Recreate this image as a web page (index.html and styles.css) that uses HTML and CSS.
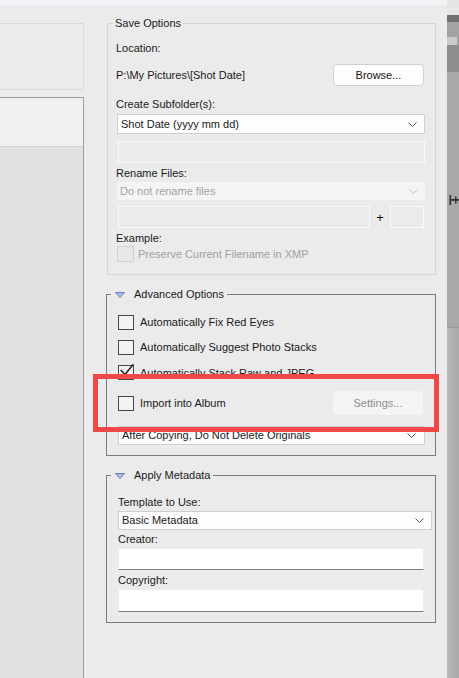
FILE: index.html
```html
<!DOCTYPE html>
<html>
<head>
<meta charset="utf-8">
<link rel="stylesheet" href="styles.css">
</head>
<body>
<div class="app">
  <div class="left">
    <div class="left-top"></div>
    <div class="left-list">
      <div class="left-head"></div>
      <div class="left-body"></div>
    </div>
  </div>

  <div class="main">
    <div class="group save">
      <div class="title save-title"><span>Save Options</span></div>
      <div class="lbl lbl-loc">Location:</div>
      <div class="row-loc">
        <span>P:\My Pictures\[Shot Date]</span>
        <div class="btn">Browse...</div>
      </div>
      <div class="lbl lbl-sub">Create Subfolder(s):</div>
      <div class="select sel-sub">
        <span>Shot Date (yyyy mm dd)</span>
        <svg class="chev" width="9" height="5" viewBox="0 0 9 5"><polyline points="0.5,0.5 4.5,4.5 8.5,0.5"/></svg>
      </div>
      <div class="dis-input"></div>
      <div class="lbl lbl-ren">Rename Files:</div>
      <div class="select dis-select">
        <span>Do not rename files</span>
        <svg class="chev light" width="9" height="5" viewBox="0 0 9 5"><polyline points="0.5,0.5 4.5,4.5 8.5,0.5"/></svg>
      </div>
      <div class="inrow">
        <div class="dis-input wide"></div>
        <div class="plus">+</div>
        <div class="dis-input small"></div>
      </div>
      <div class="lbl lbl-ex">Example:</div>
      <div class="cbrow dis">
        <span class="cb cb-dis"></span>
        <span class="cbtext">Preserve Current Filename in XMP</span>
      </div>
    </div>

    <div class="group adv">
      <div class="title adv-title"><span><svg class="tri" width="10" height="6" viewBox="0 0 10 6"><polygon points="0.5,0.5 9.5,0.5 5,5.5"/></svg>Advanced Options</span></div>
      <div class="cbrow r-1"><span class="cb"></span><span class="cbtext">Automatically Fix Red Eyes</span></div>
      <div class="cbrow r-2"><span class="cb"></span><span class="cbtext">Automatically Suggest Photo Stacks</span></div>
      <div class="cbrow r-3"><span class="cb"><svg class="check" width="16" height="16" viewBox="0 0 16 16"><polyline points="2.7,6 7,10.5 15.3,0.3"/></svg></span><span class="cbtext">Automatically Stack Raw and JPEG</span></div>
      <div class="cbrow r-4"><span class="cb"></span><span class="cbtext">Import into Album</span><div class="btn-dis">Settings...</div></div>
      <div class="select sel-after">
        <span>After Copying, Do Not Delete Originals</span>
        <svg class="chev" width="9" height="5" viewBox="0 0 9 5"><polyline points="0.5,0.5 4.5,4.5 8.5,0.5"/></svg>
      </div>
    </div>

    <div class="group meta">
      <div class="title adv-title"><span><svg class="tri" width="10" height="6" viewBox="0 0 10 6"><polygon points="0.5,0.5 9.5,0.5 5,5.5"/></svg>Apply Metadata</span></div>
      <div class="lbl lbl-tpl">Template to Use:</div>
      <div class="select sel-tpl">
        <span>Basic Metadata</span>
        <svg class="chev" width="9" height="5" viewBox="0 0 9 5"><polyline points="0.5,0.5 4.5,4.5 8.5,0.5"/></svg>
      </div>
      <div class="lbl lbl-cr">Creator:</div>
      <div class="txt txt-cr"></div>
      <div class="lbl lbl-cp">Copyright:</div>
      <div class="txt txt-cp"></div>
    </div>
  </div>

  <div class="rail">
    <div class="r1"></div>
    <div class="r2"></div>
    <div class="r3"></div>
    <div class="r4"><div class="r4a"></div></div>
    <div class="r5"></div>
    <div class="r6">
      <svg class="glyph" width="12" height="10" viewBox="0 0 12 10"><rect x="2.5" y="0" width="1.6" height="10"/><rect x="4" y="4" width="8" height="1.8"/><rect x="8" y="1.5" width="1.5" height="7"/></svg>
    </div>
    <div class="r7"></div>
  </div>
</div>
<div class="annot"></div>
</body>
</html>
```
FILE: styles.css
```css
* { box-sizing: border-box; }
html, body { margin: 0; padding: 0; }
body {
  width: 459px;
  height: 678px;
  overflow: hidden;
  position: relative;
  background: #ebebeb;
  font: 11px/13px "Liberation Sans", Arial, sans-serif;
  color: #1a1a1a;
}
.app { display: flex; height: 678px; }

/* left panel */
.left { width: 84px; border-top: 5px solid #f2f3f7; display: flex; flex-direction: column; }
.left-top { margin-top: 18px; height: 67px; border: 1px solid #d9d9d9; border-left: none; }
.left-list { margin-top: 7px; flex: 1; border-top: 1px solid #9c9c9c; border-right: 1px solid #9c9c9c; display: flex; flex-direction: column; }
.left-head { height: 49px; background: #f0f0f0; border-bottom: 1px solid #cfcfcf; }
.left-body { flex: 1; background: #e1e1e1; }

/* main */
.main { width: 363px; border-top: 5px solid #f2f3f7; padding: 0 11px 0 22px; }
.group { border: 1px solid #7c7c7c; }
.group.save { margin: 18px 0 0 1px; border-color: #d6d6d6; padding: 0 10px 12px 8px; }
.group.adv { margin-top: 19px; padding: 0 10px 10px 11px; }
.group.meta { margin-top: 19px; padding: 0 3px 10px 11px; }

.title { display: flex; align-items: center; height: 13px; margin-top: -7px; }
.title span { background: #ebebeb; display: flex; align-items: center; height: 13px; }
.save-title span { margin-left: -3px; padding: 0 2px; }
.adv-title span { margin-left: -7px; padding: 0 3px 0 4px; }
.tri { margin-right: 9px; }
.tri polygon { fill: #aebbe9; stroke: #6b7cb8; stroke-width: 1; }

.lbl { height: 13px; white-space: nowrap; }
.lbl-loc { margin-top: 12px; }
.row-loc { margin-top: 9px; height: 22px; display: flex; align-items: center; justify-content: space-between; padding-right: 1px; }
.btn { width: 91px; height: 22px; background: #fdfdfd; border: 1px solid #d0d0d0; border-radius: 4px; display: flex; align-items: center; justify-content: center; color: #111; }
.lbl-sub { margin-top: 12px; }

.select { display: flex; align-items: center; justify-content: space-between; background: #fdfdfd; border: 1px solid #cfcfcf; padding: 0 7px 0 3px; white-space: nowrap; }
.chev polyline { fill: none; stroke: #555; stroke-width: 1; }
.chev.light polyline { stroke: #c2c2c2; }
.sel-sub { margin: 3px 0 0 1px; height: 20px; }
.dis-input { margin: 7px 0 0 2px; height: 22px; border: 1px solid #f9f9f9; }
.lbl-ren { margin-top: 4px; }
.dis-select { margin: 2px 0 0 1px; height: 18px; border: none; background: #f4f4f4; color: #a2a2a2; padding-left: 3px; }
.inrow { margin: 6px 0 0 0; height: 22px; display: flex; align-items: center; }
.inrow .dis-input { margin: 0; }
.inrow .wide { margin-left: 2px; width: 252px; }
.plus { width: 20px; text-align: center; font-size: 13px; color: #111; }
.inrow .small { width: 34px; }
.lbl-ex { margin-top: 4px; }

.cbrow { display: flex; align-items: center; white-space: nowrap; }
.cb { width: 16px; height: 15px; border: 1px solid #474747; background: #f3f3f3; flex: none; display: flex; }
.cbtext { margin-left: 6px; }
.cbrow.dis { margin-top: 1px; height: 16px; }
.cb-dis { margin-left: 1px; width: 17px; height: 16px; border-color: #d2d2d2; background: #e8e8e8; }
.cbrow.dis .cbtext { margin-left: 4px; color: #a0a0a0; }
.check { margin: -2px 0 0 -1px; overflow: visible; }
.check polyline { fill: none; stroke: #262626; stroke-width: 1.6; }

.r-1 { margin-top: 14px; height: 15px; }
.r-2 { margin-top: 10px; height: 15px; }
.r-3 { margin-top: 10px; height: 15px; }
.r-3 .cbtext { margin-top: 2px; }
.r-4 { margin-top: 11px; height: 24px; }
.btn-dis { margin-left: auto; margin-right: 2px; width: 90px; height: 24px; background: #f4f4f4; border-radius: 4px; color: #8c8c8c; display: flex; align-items: center; justify-content: center; }
.sel-after { margin-top: 11px; height: 19px; padding-right: 8px; }

.lbl-tpl { margin-top: 14px; }
.sel-tpl { margin-top: 2px; height: 19px; }
.lbl-cr { margin-top: 3px; }
.txt { margin: 2px 8px 0 0; background: #fff; border: 1px solid #ececec; border-bottom-color: #7d7d7d; }
.txt-cr { height: 22px; }
.lbl-cp { margin-top: 4px; }
.txt-cp { height: 23px; }

/* right rail */
.rail { width: 12px; display: flex; flex-direction: column; background: #b3b3b3; }
.r1 { height: 15px; background: #e6e6e6; }
.r2 { height: 7px; background: #727272; }
.r3 { height: 15px; background: #a3a3a3; }
.r4 { height: 8px; background: #a3a3a3; display: flex; }
.r4a { width: 10px; background: #cbcbcb; }
.r5 { height: 27px; background: #8d8d8d; }
.r6 { height: 255px; background: #a8a8a8; padding-top: 123px; }
.glyph { display: block; }
.glyph rect { fill: #333; }
.r7 { flex: 1; border-top: 1px solid #979797; background: linear-gradient(to right, #b9b9b9, #a9a9a9); }

/* annotation highlight */
.annot { position: absolute; left: 93px; top: 374px; width: 346px; height: 58px; border: 5px solid #ef4848; pointer-events: none; }
```
